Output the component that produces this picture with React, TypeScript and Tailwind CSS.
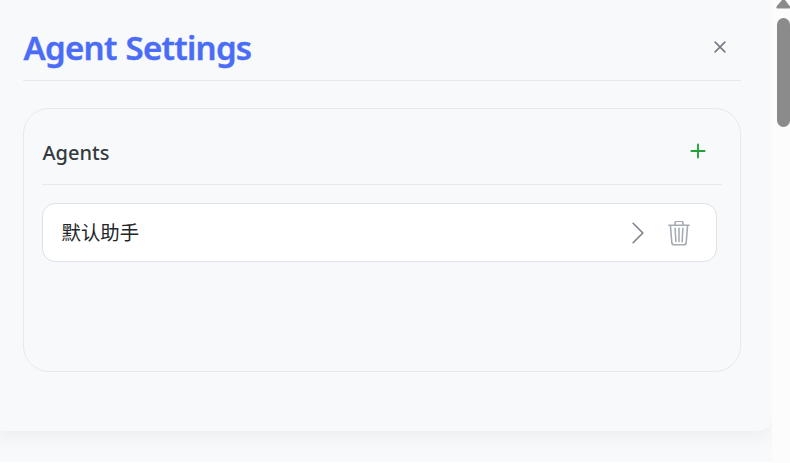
import { BsChevronRight, BsPlus, BsTrash3, BsX } from 'react-icons/bs';

const AGENTS = [{ id: 'default', name: '默认助手' }];

function AgentRow({ name }: { name: string }) {
    return (
        <li className="flex h-[59px] items-center justify-between rounded-[13px] border border-[#dee2e6] bg-white pl-[18.5px] pr-[24px]">
            <span className="pt-px text-[19.4px] leading-none text-[#212529]">{name}</span>
            <div className="flex items-center gap-[15px] pt-px">
                <button aria-label="Open agent" className="text-[#7b848c]">
                    <BsChevronRight size={26} />
                </button>
                <button aria-label="Delete agent" className="text-[#a4abb2]">
                    <BsTrash3 size={26} className="p-[0.5px]" />
                </button>
            </div>
        </li>
    );
}

function Scrollbar() {
    return (
        <div className="flex w-[18px] shrink-0 flex-col items-end bg-[#fcfcfc]">
            <svg width="14" height="9" viewBox="0 0 14 9" fill="#8b8b8b">
                <path d="M6 0h3l5 6.500q.5 2-1 2H1.500Q0 8.500.5 6.500z" />
            </svg>
            <div className="mt-[9px] h-[109px] w-[13px] rounded-full bg-[#8b8b8b]" />
        </div>
    );
}

export default function App() {
    return (
        <div className="flex h-[463px] w-[790px] overflow-hidden bg-[#f8f9fb] font-['Noto_Sans','Noto_Sans_CJK_SC',sans-serif]">
            <div className="flex-1 overflow-hidden border-b border-white">
                <main className="-ml-[9px] h-[431px] rounded-b-[13px] bg-[#f8f9fb] pl-[32px] pr-[31px] shadow-[0_5px_20px_rgba(0,0,0,0.05)]">
                    <header className="flex h-[81px] items-center justify-between border-b border-[#e7e9ec] pr-[8px] pt-[14px]">
                        <h1 className="pl-[0.5px] pt-px text-[33px] font-semibold leading-none tracking-[-0.7px] [-webkit-text-stroke:0.4px_#4a6cf7] [word-spacing:1px] text-[#4a6cf7]">Agent Settings</h1>
                        <button aria-label="Close" className="text-[#737c84]">
                            <BsX size={26} />
                        </button>
                    </header>

                    <section className="mt-[27px] h-[264px] rounded-[26px] border border-[#e7e9ec] px-[18px]">
                        <div className="flex h-[76px] items-center justify-between border-b border-[#e7e9ec] pr-[9px] pt-[10px]">
                            <h2 className="pl-[0.5px] pt-[2px] text-[20px] font-medium leading-none text-[#343a40]">Agents</h2>
                            <button aria-label="Add agent" className="pb-px text-[#21a038]">
                                <BsPlus size={30} />
                            </button>
                        </div>
                        <ul className="mt-[18px] mr-[5px]">
                            {AGENTS.map((agent) => (
                                <AgentRow key={agent.id} name={agent.name} />
                            ))}
                        </ul>
                    </section>
                </main>
            </div>
            <Scrollbar />
        </div>
    );
}
